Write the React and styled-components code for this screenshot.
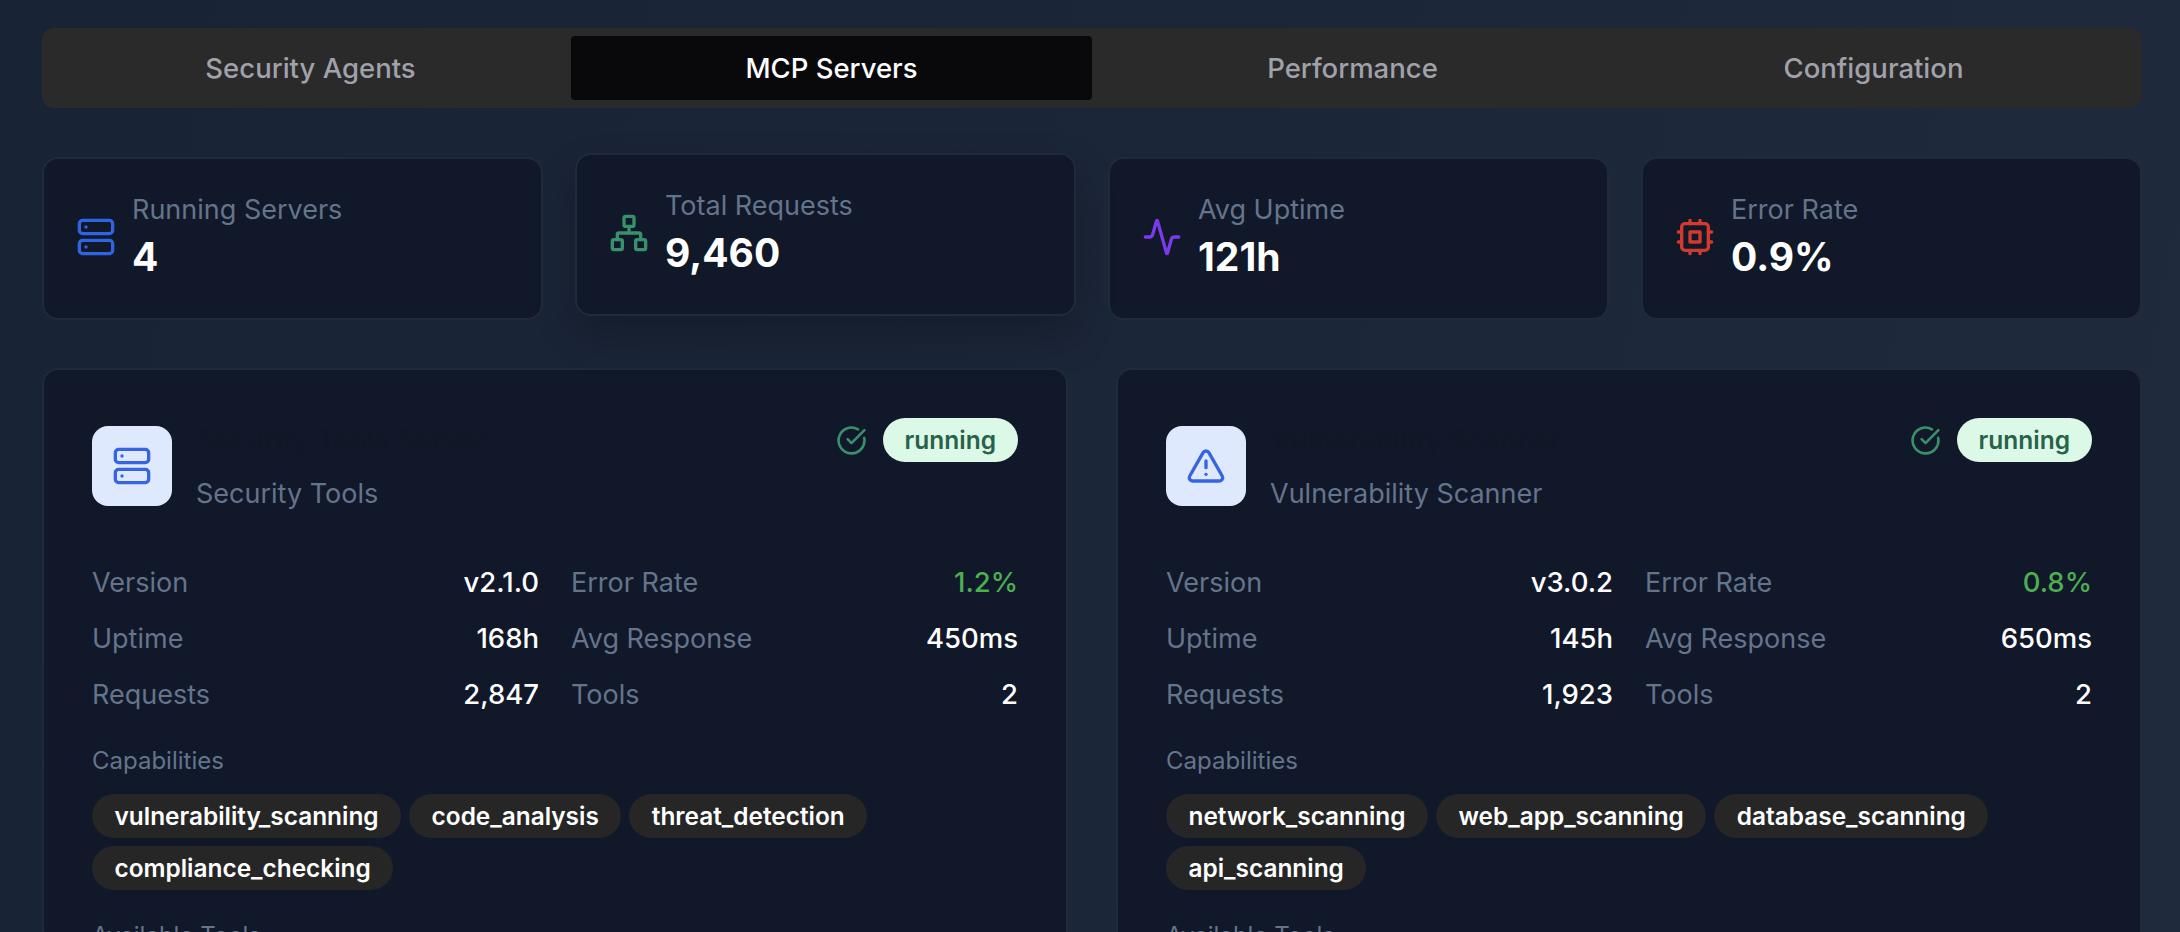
import styled, { createGlobalStyle } from 'styled-components';
import {
  Server,
  Network,
  Activity,
  CircleCheckBig,
  TriangleAlert,
} from 'lucide-react';

const GlobalStyle = createGlobalStyle`
  html, body {
    margin: 0;
    height: 100%;
    overflow: hidden;
    background: #1c2639;
  }
  * {
    box-sizing: border-box;
  }
`;

const CpuIcon = ({ size = 40, color }) => (
  <svg
    width={size}
    height={size}
    viewBox="0 0 24 24"
    fill="none"
    stroke={color}
    strokeWidth="2"
    strokeLinecap="round"
    strokeLinejoin="round"
  >
    <rect x="4" y="4" width="16" height="16" rx="2" />
    <rect x="9" y="9" width="6" height="6" />
    <path d="M15 2v2M15 20v2M2 15h2M2 9h2M20 15h2M20 9h2M9 2v2M9 20v2" />
  </svg>
);

const tabs = ['Security Agents', 'MCP Servers', 'Performance', 'Configuration'];

const stats = [
  { label: 'Running Servers', value: '4', Icon: Server, color: '#2f65e3' },
  { label: 'Total Requests', value: '9,460', Icon: Network, color: '#38916a', raised: true },
  { label: 'Avg Uptime', value: '121h', Icon: Activity, color: '#7c3aed' },
  { label: 'Error Rate', value: '0.9%', Icon: CpuIcon, color: '#d23a2e' },
];

const servers = [
  {
    name: 'Security Tools Server',
    type: 'Security Tools',
    Icon: Server,
    metrics: [
      ['Version', 'v2.1.0'],
      ['Error Rate', '1.2%', true],
      ['Uptime', '168h'],
      ['Avg Response', '450ms'],
      ['Requests', '2,847'],
      ['Tools', '2'],
    ],
    capabilities: ['vulnerability_scanning', 'code_analysis', 'threat_detection', 'compliance_checking'],
  },
  {
    name: 'Vulnerability Scanner',
    type: 'Vulnerability Scanner',
    Icon: TriangleAlert,
    metrics: [
      ['Version', 'v3.0.2'],
      ['Error Rate', '0.8%', true],
      ['Uptime', '145h'],
      ['Avg Response', '650ms'],
      ['Requests', '1,923'],
      ['Tools', '2'],
    ],
    capabilities: ['network_scanning', 'web_app_scanning', 'database_scanning', 'api_scanning'],
  },
];

const App = () => {
  return (
    <SPage>
      <GlobalStyle />
      <STabs>
        {tabs.map((tab) => (
          <STab key={tab} $active={tab === 'MCP Servers'}>
            {tab}
          </STab>
        ))}
      </STabs>
      <SStats>
        {stats.map(({ label, value, Icon, color, raised }) => (
          <SStatCard key={label} $raised={raised}>
            <Icon size={40} color={color} />
            <div>
              <SStatLabel>{label}</SStatLabel>
              <SStatValue>{value}</SStatValue>
            </div>
          </SStatCard>
        ))}
      </SStats>
      <SServers>
        {servers.map(({ name, type, Icon, metrics, capabilities }) => (
          <SServerCard key={name}>
            <SHeader>
              <SIdentity>
                <SIconBox>
                  <Icon size={40} color="#3565e5" />
                </SIconBox>
                <div>
                  <SName>{name}</SName>
                  <SType>{type}</SType>
                </div>
              </SIdentity>
              <SStatus>
                <CircleCheckBig size={31} color="#38916a" />
                <SBadge>running</SBadge>
              </SStatus>
            </SHeader>
            <SMetrics>
              {metrics.map(([label, value, good]) => (
                <SMetric key={label}>
                  <SMetricLabel>{label}</SMetricLabel>
                  <SMetricValue $good={good}>{value}</SMetricValue>
                </SMetric>
              ))}
            </SMetrics>
            <SSectionLabel>Capabilities</SSectionLabel>
            <SPills>
              {capabilities.map((cap) => (
                <SPill key={cap}>{cap}</SPill>
              ))}
            </SPills>
            <SToolsLabel>Available Tools</SToolsLabel>
          </SServerCard>
        ))}
      </SServers>
    </SPage>
  );
};

const SPage = styled.div`
  height: 932px;
  overflow: hidden;
  padding: 28px 38px 0 42px;
  font-family: Inter, 'Liberation Sans', sans-serif;
  background: linear-gradient(100deg, #192336 0%, #1c2639 55%, #1f2a3c 100%);
`;

const STabs = styled.div`
  display: grid;
  grid-template-columns: repeat(4, 1fr);
  height: 80px;
  padding: 8px;
  background: #2a2a2a;
  border-radius: 12px;
`;

const STab = styled.div`
  display: flex;
  align-items: center;
  justify-content: center;
  font-size: 27.5px;
  font-weight: 500;
  border-radius: 4px;
  color: ${(props) => (props.$active ? '#ffffff' : '#a1a1aa')};
  background: ${(props) => (props.$active ? '#09090b' : 'transparent')};
`;

const SStats = styled.div`
  display: grid;
  grid-template-columns: repeat(4, 1fr);
  gap: 32px;
  margin-top: 49px;
`;

const SStatCard = styled.div`
  display: flex;
  align-items: center;
  gap: 16px;
  height: 163px;
  padding: 0 32px 3px;
  background: #111829;
  border: 2px solid #1f2a3d;
  border-radius: 16px;
  transform: ${(props) => (props.$raised ? 'translateY(-4px)' : 'none')};
  box-shadow: ${(props) => (props.$raised ? '0 20px 40px rgba(0, 0, 0, 0.22)' : 'none')};
`;

const SStatLabel = styled.div`
  font-size: 27px;
  line-height: 38px;
  color: #64748b;
`;

const SStatValue = styled.div`
  margin-top: 2px;
  font-size: 39px;
  line-height: 52px;
  font-weight: 700;
  color: #ffffff;
`;

const SServers = styled.div`
  display: grid;
  grid-template-columns: 1fr 1fr;
  gap: 48px;
  margin-top: 48px;
`;

const SServerCard = styled.div`
  height: 800px;
  padding: 48px;
  background: #111829;
  border: 2px solid #1f2a3d;
  border-radius: 16px;
`;

const SHeader = styled.div`
  display: flex;
  align-items: flex-start;
  justify-content: space-between;
`;

const SIdentity = styled.div`
  display: flex;
  align-items: center;
  gap: 24px;
`;

const SIconBox = styled.div`
  display: flex;
  align-items: center;
  justify-content: center;
  width: 80px;
  height: 80px;
  background: #dfe9fd;
  border-radius: 16px;
`;

const SName = styled.div`
  font-size: 28px;
  line-height: 44px;
  font-weight: 600;
  color: #101726;
  margin-bottom: 14px;
`;

const SType = styled.div`
  margin-bottom: 2px;
  font-size: 27px;
  line-height: 36px;
  color: #64748b;
`;

const SStatus = styled.div`
  display: flex;
  align-items: center;
  gap: 16px;
`;

const SBadge = styled.div`
  display: flex;
  align-items: center;
  height: 44px;
  padding: 0 22px;
  font-size: 24.5px;
  font-weight: 600;
  color: #27634a;
  background: #dcf8e6;
  border-radius: 22px;
`;

const SMetrics = styled.div`
  display: grid;
  grid-template-columns: 1fr 1fr;
  column-gap: 32px;
  margin-top: 40px;
`;

const SMetric = styled.div`
  display: flex;
  align-items: center;
  justify-content: space-between;
  height: 56px;
`;

const SMetricLabel = styled.span`
  font-size: 27px;
  color: #64748b;
`;

const SMetricValue = styled.span`
  font-size: 27.5px;
  font-weight: 500;
  color: ${(props) => (props.$good ? '#4caf50' : '#ffffff')};
`;

const SSectionLabel = styled.div`
  margin-top: 23px;
  font-size: 24px;
  line-height: 32px;
  color: #64748b;
`;

const SPills = styled.div`
  display: flex;
  flex-wrap: wrap;
  gap: 8px;
  margin-top: 17px;
`;

const SPill = styled.span`
  display: flex;
  align-items: center;
  height: 44px;
  padding: 0 22.5px;
  font-size: 24.4px;
  font-weight: 600;
  color: #ffffff;
  background: #262626;
  border-radius: 22px;
`;

const SToolsLabel = styled(SSectionLabel)`
  margin-top: 30px;
`;

export default App;
